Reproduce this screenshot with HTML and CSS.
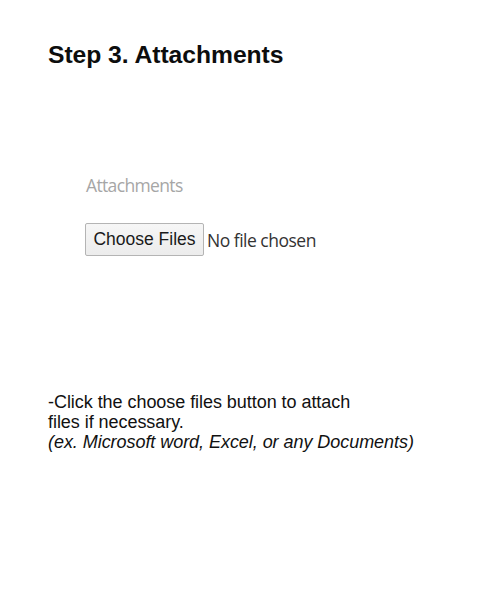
FILE: index.html
```html
<!DOCTYPE html>
<html lang="en">
<head>
<meta charset="utf-8">
<title>Step 3. Attachments</title>
<link rel="stylesheet" href="styles.css">
</head>
<body>
<main class="page">
  <h1 class="title">Step 3. Attachments</h1>
  <section class="field">
    <label class="field-label" for="files">Attachments</label>
    <div class="file-row">
      <button class="file-btn" id="files" type="button">Choose Files</button>
      <span class="file-status">No file chosen</span>
    </div>
  </section>
  <div class="note">
    <p class="note-line">-Click the choose files button to attach<br>files if necessary.</p>
    <p class="note-line note-ex">(ex. Microsoft word, Excel, or any Documents)</p>
  </div>
</main>
</body>
</html>
```

FILE: styles.css
```css
html, body {
  margin: 0;
  padding: 0;
  background: #ffffff;
}

.page {
  width: 500px;
  height: 600px;
  box-sizing: border-box;
  padding: 41px 0 0 48px;
  font-family: "Liberation Sans", Arial, sans-serif;
  color: #111;
}

.title {
  margin: 0;
  font-size: 24.7px;
  line-height: 28px;
  font-weight: bold;
  letter-spacing: -0.05px;
  color: #0d0d0d;
}

.field {
  margin: 104px 0 0 37px;
  display: flex;
  flex-direction: column;
  align-items: flex-start;
  gap: 26px;
}

.field-label {
  font-family: "Open Sans", "Noto Sans", sans-serif;
  font-size: 17.5px;
  line-height: 24px;
  letter-spacing: -0.65px;
  color: #a6a6a6;
  margin-left: 1px;
}

.file-row {
  display: flex;
  align-items: center;
  gap: 3px;
}

.file-btn {
  box-sizing: border-box;
  width: 119px;
  height: 33px;
  padding: 0;
  border: 1px solid #b4b4b4;
  border-radius: 2px;
  background: linear-gradient(#f6f6f6, #ececec);
  font-family: "Liberation Sans", Arial, sans-serif;
  font-size: 17.5px;
  color: #1a1a1a;
}

.file-status {
  font-family: "Open Sans", "Noto Sans", sans-serif;
  font-size: 17.5px;
  letter-spacing: -0.5px;
  color: #333;
}

.note {
  margin-top: 136px;
}

.note-line {
  margin: 0;
  font-size: 18px;
  line-height: 20px;
  letter-spacing: -0.05px;
  color: #111;
}

.note-ex {
  font-style: italic;
}
```
